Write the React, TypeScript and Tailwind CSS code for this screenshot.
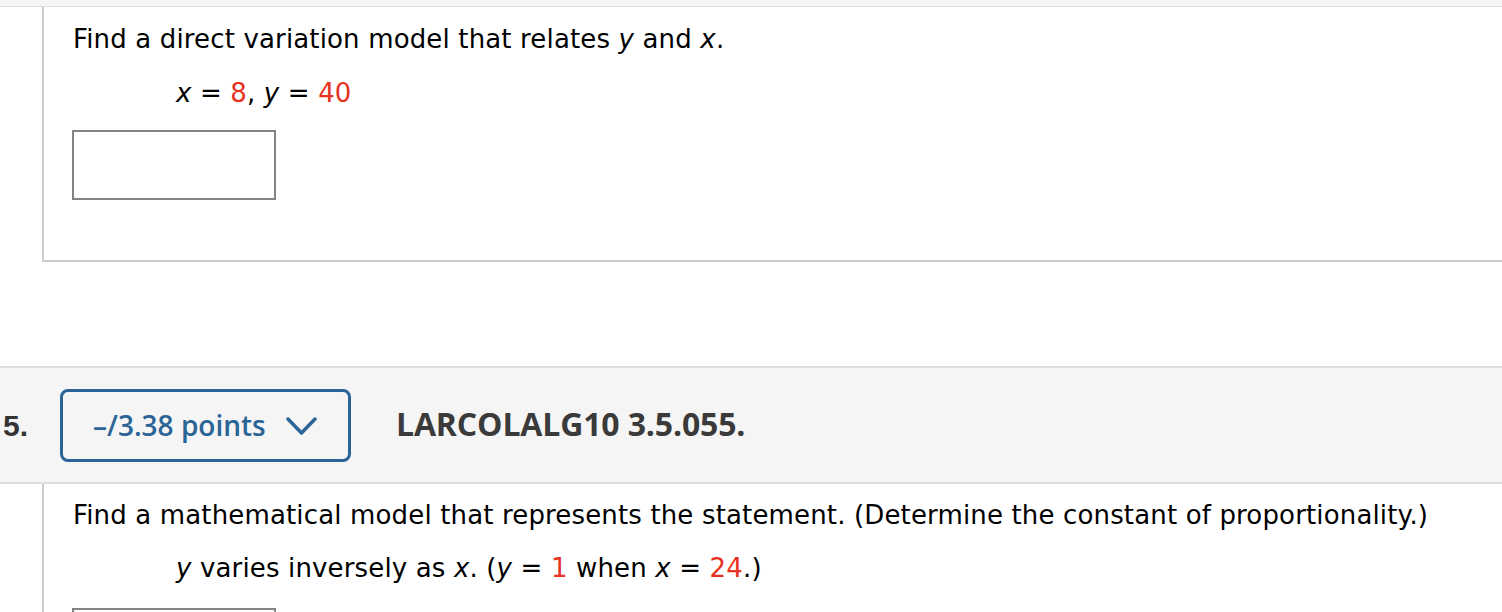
import React from "react";

const Red: React.FC<{ children: React.ReactNode }> = ({ children }) => (
  <span className="text-[#e8321f]">{children}</span>
);

const V: React.FC<{ children: React.ReactNode }> = ({ children }) => <i>{children}</i>;

const AnswerBox: React.FC = () => (
  <div className="-ml-px w-[204px] h-[70px] border-2 border-[#838383] bg-white" />
);

const App: React.FC = () => {
  return (
    <div className="w-[1502px] h-[612px] overflow-hidden bg-white font-['DejaVu_Sans',sans-serif] text-[26px] tracking-[0.15px] text-black">
      {/* top strip from previous question */}
      <div className="h-[6px] bg-[#f5f5f5] border-b border-[#dddddd] box-content" />

      {/* question 4 body */}
      <div className="ml-[42px] h-[255px] border-l-2 border-b-2 border-[#cccccc] pl-[29px] pt-[17px]">
        <p className="leading-[30px]">
          Find a direct variation model that relates <V>y</V> and <V>x</V>.
        </p>
        <p className="leading-[30px] mt-[24px] pl-[103px]">
          <V>x</V> = <Red>8</Red>, <V>y</V> = <Red>40</Red>
        </p>
        <div className="mt-[22px]">
          <AnswerBox />
        </div>
      </div>

      <div className="h-[104px]" />

      {/* question 5 header */}
      <div className="h-[114px] bg-[#f5f5f5] border-y-2 border-[#dddddd] box-content flex items-center tracking-normal">
        <span className="pl-[3px] w-[60px] font-['Liberation_Sans',sans-serif] font-bold text-[30px] text-[#333333]">
          5.
        </span>
        <button className="w-[291px] h-[73px] border-[3px] border-[#2b6496] rounded-[8px] flex items-center justify-between pl-[30px] pr-[31px] font-['Open_Sans',sans-serif] font-semibold text-[28px] text-[#2b6496]">
          <span>–/3.38 points</span>
          <svg width="31" height="19" viewBox="0 0 31 19" fill="none" className="mt-[2px]">
            <path d="M2 2 L15.5 16 L29 2" stroke="#2b6496" strokeWidth="3.5" strokeLinecap="round" strokeLinejoin="round" />
          </svg>
        </button>
        <span className="ml-[45px] font-['Open_Sans',sans-serif] font-bold text-[32px] tracking-[-0.15px] text-[#3a3a3a] -mt-[2px]">
          LARCOLALG10 3.5.055.
        </span>
      </div>

      {/* question 5 body */}
      <div className="ml-[42px] border-l-2 border-[#cccccc] pl-[29px] pt-[16px] h-[200px]">
        <p className="leading-[30px]">
          Find a mathematical model that represents the statement. (Determine the constant of proportionality.)
        </p>
        <p className="leading-[30px] mt-[23px] pl-[103px]">
          <V>y</V> varies inversely as <V>x</V>. (<V>y</V> = <Red>1</Red> when <V>x</V> = <Red>24</Red>.)
        </p>
        <div className="mt-[25px]">
          <AnswerBox />
        </div>
      </div>
    </div>
  );
};

export default App;
